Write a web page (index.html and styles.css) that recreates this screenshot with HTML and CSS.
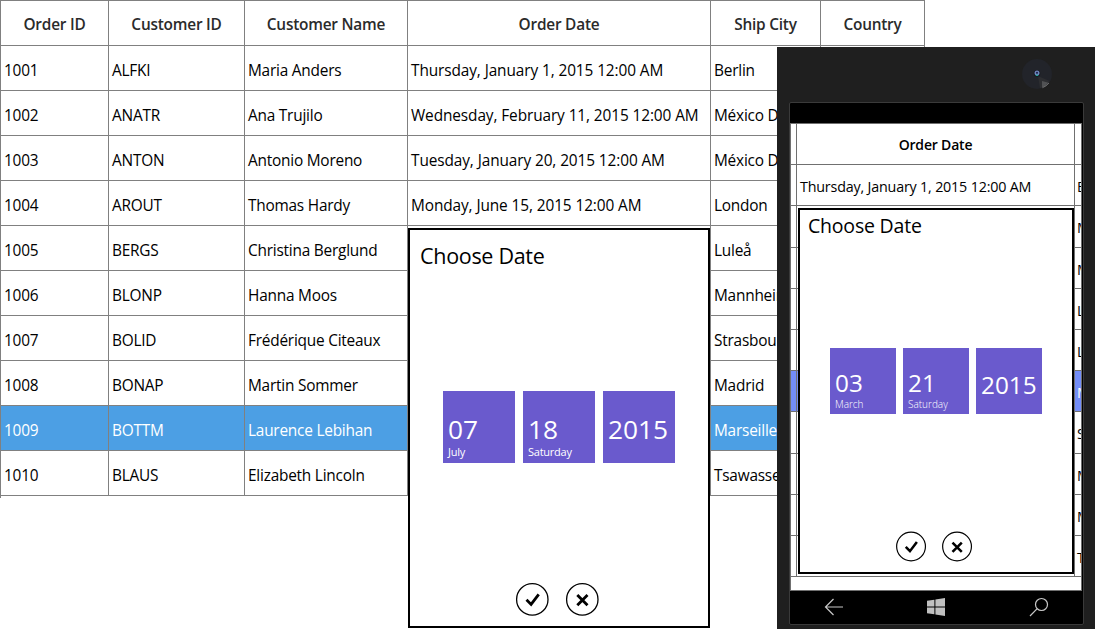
FILE: index.html
```html
<!DOCTYPE html>
<html lang="en">
<head>
<meta charset="utf-8">
<title>Orders</title>
<link rel="stylesheet" href="styles.css">
</head>
<body>
<main class="stage">
  <section class="orders">
    <div class="row head"><div>Order ID</div><div>Customer ID</div><div>Customer Name</div><div>Order Date</div><div>Ship City</div><div>Country</div></div>
    <div class="row"><div>1001</div><div>ALFKI</div><div>Maria Anders</div><div class="date">Thursday, January 1, 2015 12:00 AM</div><div>Berlin</div><div></div></div>
    <div class="row"><div>1002</div><div>ANATR</div><div>Ana Trujilo</div><div class="date">Wednesday, February 11, 2015 12:00 AM</div><div>México D.F.</div><div></div></div>
    <div class="row"><div>1003</div><div>ANTON</div><div>Antonio Moreno</div><div class="date">Tuesday, January 20, 2015 12:00 AM</div><div>México D.F.</div><div></div></div>
    <div class="row"><div>1004</div><div>AROUT</div><div>Thomas Hardy</div><div class="date">Monday, June 15, 2015 12:00 AM</div><div>London</div><div></div></div>
    <div class="row"><div>1005</div><div>BERGS</div><div>Christina Berglund</div><div></div><div>Luleå</div><div></div></div>
    <div class="row"><div>1006</div><div>BLONP</div><div>Hanna Moos</div><div></div><div>Mannheim</div><div></div></div>
    <div class="row"><div>1007</div><div>BOLID</div><div>Frédérique Citeaux</div><div></div><div>Strasbourg</div><div></div></div>
    <div class="row"><div>1008</div><div>BONAP</div><div>Martin Sommer</div><div></div><div>Madrid</div><div></div></div>
    <div class="row selected"><div>1009</div><div>BOTTM</div><div>Laurence Lebihan</div><div></div><div>Marseille</div><div></div></div>
    <div class="row"><div>1010</div><div>BLAUS</div><div>Elizabeth Lincoln</div><div></div><div>Tsawassen</div><div></div></div>
  </section>

  <section class="picker desktop-picker">
    <h2>Choose Date</h2>
    <div class="tiles">
      <div class="tile"><b>07</b><small>July</small></div>
      <div class="tile"><b>18</b><small>Saturday</small></div>
      <div class="tile year"><b>2015</b></div>
    </div>
    <div class="actions">
      <svg viewBox="0 0 34 34"><circle cx="17.3" cy="17.4" r="15.7"/><path d="M11.5 17.8l4.6 4.6 7.6-10"/></svg>
      <svg viewBox="0 0 34 34"><circle cx="17.3" cy="17.4" r="15.7"/><path d="M12.3 13.1l10.2 10.2M22.5 13.1L12.3 23.3"/></svg>
    </div>
  </section>

  <section class="phone">
    <svg class="camera" viewBox="0 0 30 30">
      <circle cx="15" cy="15" r="15" fill="#22242a"/>
      <path d="M16 17L27.5 22A14.6 14.6 0 0 1 18 29.3Z" fill="#2d2e31"/>
      <path d="M20 22L26.5 23.8A14 14 0 0 1 20 28.5Z" fill="#515254"/>
      <path d="M27 24A14.7 14.7 0 0 1 20.5 28.7" fill="none" stroke="#8b8b8b" stroke-width=".7"/>
      <circle cx="15" cy="14.5" r="3.2" fill="#14151c"/>
      <circle cx="15" cy="14" r="2.5" fill="#6f86bd"/>
      <circle cx="15" cy="13.8" r="1.1" fill="#20234c"/>
      <path d="M13.8 16.3h2.4" stroke="#25a69a" stroke-width="1.3"/>
    </svg>
    <div class="screen">
      <div class="status"></div>
      <div class="mobile-grid">
        <div class="mrow mhead"><i></i><div>Order Date</div><div></div></div>
        <div class="mrow"><i></i><div>Thursday, January 1, 2015 12:00 AM</div><div>Berlin</div></div>
        <div class="mrow"><i></i><div></div><div>México</div></div>
        <div class="mrow"><i></i><div></div><div>México</div></div>
        <div class="mrow"><i></i><div></div><div>London</div></div>
        <div class="mrow"><i></i><div></div><div>Luleå</div></div>
        <div class="mrow selected"><i></i><div></div><div>Mannheim</div></div>
        <div class="mrow"><i></i><div></div><div>Strasbourg</div></div>
        <div class="mrow"><i></i><div></div><div>Madrid</div></div>
        <div class="mrow"><i></i><div></div><div>Marseille</div></div>
        <div class="mrow"><i></i><div></div><div>Tsawassen</div></div>
      </div>
      <nav class="navbar">
        <svg width="20" height="18" viewBox="0 0 20 18"><path d="M19 9H1.5M9.5 1L1.5 9l8 8"/></svg>
        <svg class="win" width="18" height="18" viewBox="0 0 18 18"><path d="M0 2.8L7.4 1.7V8.5H0ZM8.4 1.5L18 0V8.5H8.4ZM0 9.5H7.4V16.3L0 15.2ZM8.4 9.5H18V18L8.4 16.5Z"/></svg>
        <svg width="20" height="20" viewBox="0 0 20 20"><circle cx="12.5" cy="7.5" r="6"/><path d="M8.2 11.7L1 19"/></svg>
      </nav>
    </div>
    <section class="picker phone-picker">
      <h2>Choose Date</h2>
      <div class="tiles">
        <div class="tile"><b>03</b><small>March</small></div>
        <div class="tile"><b>21</b><small>Saturday</small></div>
        <div class="tile year"><b>2015</b></div>
      </div>
      <div class="actions">
        <svg viewBox="0 0 34 34"><circle cx="16.5" cy="17" r="15.8"/><path d="M10.7 17.5l4.6 4.6 7.6-10"/></svg>
        <svg viewBox="0 0 34 34"><circle cx="16.5" cy="17" r="15.8"/><path d="M11.5 12.7l10.2 10.2M21.7 12.7L11.5 22.9"/></svg>
      </div>
    </section>
  </section>
</main>
</body>
</html>
```
FILE: styles.css
```css
* { box-sizing: border-box; }
body {
  margin: 0;
  background: #fff;
  color: #000;
  font-family: "Open Sans", "Noto Sans", sans-serif;
}
.stage {
  position: relative;
  width: 1095px;
  height: 629px;
  overflow: hidden;
}

.orders {
  width: 925px;
  height: 498px;
  border-top: 1px solid #808080;
  border-left: 1px solid #808080;
  font-size: 15.4px;
  letter-spacing: -0.22px;
}
.row {
  display: grid;
  grid-template-columns: 108px 136px 163px 303px 110px 104px;
  height: 45px;
}
.row > div {
  border-right: 1px solid #808080;
  border-bottom: 1px solid #808080;
  padding: 3px 0 0 3px;
  line-height: 43px;
  white-space: nowrap;
  overflow: hidden;
}
.row > .date { letter-spacing: -0.1px; }
.row.head > div {
  padding: 2px 0 0;
  text-align: center;
  font-weight: 600;
  color: #2b2b2b;
}
.row.selected > div { background: #4c9fe4; color: #fff; }

.picker {
  position: absolute;
  display: flex;
  flex-direction: column;
  background: #fff;
  border: 2px solid #000;
}
.picker h2 { margin: 0; font-weight: 400; white-space: nowrap; }
.tiles { display: flex; }
.tile {
  display: flex;
  flex-direction: column;
  background: #6a5acd;
  color: #fff;
  white-space: nowrap;
}
.tile b { font-weight: 400; }
.tile small { font-weight: 400; }
.actions { display: flex; margin-top: auto; }
.actions svg { fill: none; stroke: #000; }
.actions circle { stroke-width: 1.3; }
.actions path { stroke-width: 2.8; }

.desktop-picker { left: 408px; top: 228px; width: 302px; height: 400px; }
.desktop-picker h2 {
  padding: 12px 0 0 10px;
  height: 161px;
  font-size: 21.5px;
  line-height: 28px;
  letter-spacing: -0.3px;
}
.desktop-picker .tiles { gap: 8px; padding-left: 33px; }
.desktop-picker .tile { width: 72px; height: 72px; padding: 22px 0 0 5px; }
.desktop-picker .tile b { font-size: 26.3px; line-height: 32px; }
.desktop-picker .tile small { font-size: 11px; line-height: 14px; letter-spacing: -0.25px; }
.desktop-picker .actions { gap: 16px; padding: 0 0 10px 105px; }
.desktop-picker .actions svg { width: 34px; height: 34px; }

.phone {
  position: absolute;
  left: 777px;
  top: 47px;
  width: 318px;
  height: 582px;
  background: #1f1f1f;
}
.camera { position: absolute; left: 245px; top: 12px; width: 30px; height: 30px; }
.screen {
  margin: 55px 0 0 12px;
  width: 295px;
  height: 523px;
  border: 1px solid #3a3a3a;
  border-radius: 2px;
  background: #000;
}
.status { height: 20px; }
.mobile-grid {
  margin-right: 1px;
  height: 468px;
  border: 1px solid #707070;
  background: #fff;
  overflow: hidden;
  font-size: 14.3px;
  letter-spacing: -0.18px;
}
.mrow {
  display: grid;
  grid-template-columns: 6px 278px 6px;
  height: 41.2px;
}
.mrow > * {
  border-right: 1px solid #707070;
  border-bottom: 1px solid #707070;
  padding: 2px 0 0 3px;
  line-height: 39px;
  white-space: nowrap;
  overflow: hidden;
}
.mrow > i { padding: 0; }
.mrow > :last-child { border-right: 0; padding-left: 2px; }
.mrow.mhead > div {
  padding: 1px 0 0;
  text-align: center;
  font-size: 14px;
  font-weight: 600;
}
.mrow.selected > * { background: #738df8; color: #fff; }

.navbar {
  display: flex;
  align-items: center;
  justify-content: space-between;
  height: 32px;
  padding: 0 34px 0 34px;
}
.navbar svg { fill: none; stroke: #c8c8c8; stroke-width: 1.2; }
.navbar .win { fill: #c0c0c0; stroke: none; margin-right: 2px; }

.phone-picker { left: 21px; top: 161px; width: 276px; height: 366px; }
.phone-picker h2 {
  padding: 3px 0 0 8px;
  height: 138px;
  font-size: 19.5px;
  line-height: 26px;
  letter-spacing: -0.2px;
}
.phone-picker .tiles { gap: 7px; padding-left: 30px; }
.phone-picker .tile { width: 66px; height: 66px; padding: 20px 0 0 5px; }
.phone-picker .tile b { font-size: 24.3px; line-height: 30px; }
.phone-picker .tile small { font-size: 10px; line-height: 12px; font-weight: 300; }
.phone-picker .tile.year { padding-top: 22px; }
.phone-picker .actions { gap: 15px; padding: 0 0 10px 96px; }
.phone-picker .actions svg { width: 31px; height: 31px; }
```
